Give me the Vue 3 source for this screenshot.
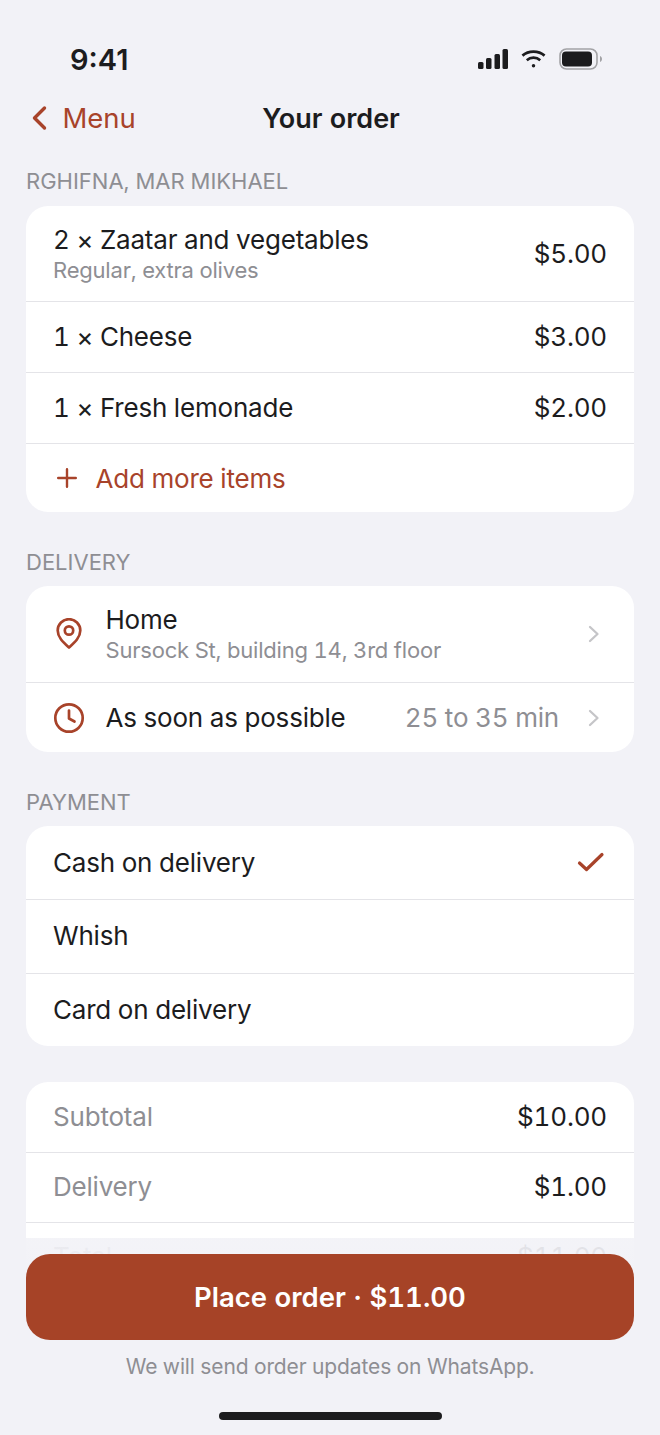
<script setup>
const orderRows = [
  { id: 'cheese', name: '1 × Cheese', price: '$3.00' },
  { id: 'lemonade', name: '1 × Fresh lemonade', price: '$2.00' },
]
const payments = [
  { name: 'Cash on delivery', selected: true },
  { name: 'Whish', selected: false },
  { name: 'Card on delivery', selected: false },
]
const totals = [
  { label: 'Subtotal', value: '$10.00' },
  { label: 'Delivery', value: '$1.00' },
  { label: 'Total', value: '$11.00' },
]
</script>

<template>
  <div class="screen">
    <div class="status">
      <span class="time">9:41</span>
      <div class="status-icons">
        <svg width="30" height="20" viewBox="0 0 30 20" fill="#1c1c1e">
          <rect x="0" y="13" width="5.500" height="7" rx="1.500" />
          <rect x="8" y="9" width="5.500" height="11" rx="1.500" />
          <rect x="16.500" y="5" width="5.500" height="15" rx="1.500" />
          <rect x="24.500" y="0" width="5.500" height="20" rx="1.500" />
        </svg>
        <svg width="25" height="20" viewBox="0 0 26 20" fill="none" stroke="#1c1c1e" stroke-width="2.800">
          <path d="M1.500 6.500C7.800 1 18.200 1 24.500 6.500" />
          <path d="M6 11.200C10 7.800 16 7.800 20 11.200" />
          <circle cx="13" cy="17" r="1.800" fill="#1c1c1e" stroke="none" />
        </svg>
        <svg width="44" height="22" viewBox="0 0 44 22" fill="none">
          <rect x="1" y="1" width="37" height="20" rx="6.500" stroke="#a3a3a6" stroke-width="1.600" />
          <rect x="3" y="3.500" width="30" height="15" rx="4" fill="#1c1c1e" />
          <path d="M41 8v6c1.400-.5 2-1.600 2-3s-.6-2.500-2-3z" fill="#a3a3a6" />
        </svg>
      </div>
    </div>

    <nav class="nav">
      <div class="back">
        <svg width="17" height="26" viewBox="0 0 17 26" fill="none" stroke="#a8432a" stroke-width="3.400" stroke-linecap="round" stroke-linejoin="round">
          <path d="M13.500 3 3.500 13l10 10" />
        </svg>
        <span>Menu</span>
      </div>
      <h1 class="title">Your order</h1>
    </nav>

    <section class="section first">
      <h2 class="label">RGHIFNA, MAR MIKHAEL</h2>
      <div class="card">
        <div class="row row-tall">
          <div class="stack">
            <span class="main">2 × Zaatar and vegetables</span>
            <span class="sub">Regular, extra olives</span>
          </div>
          <span class="main">$5.00</span>
        </div>
        <div v-for="r in orderRows" :key="r.id" class="row row-order">
          <span class="main">{{ r.name }}</span>
          <span class="main">{{ r.price }}</span>
        </div>
        <div class="row row-add">
          <svg width="22" height="22" viewBox="0 0 22 22" fill="none" stroke="#a8432a" stroke-width="2.400" stroke-linecap="round">
            <path d="M11 2.200v17.600M2.200 11h17.600" />
          </svg>
          <span class="add-text">Add more items</span>
        </div>
      </div>
    </section>

    <section class="section">
      <h2 class="label">DELIVERY</h2>
      <div class="card">
        <div class="row row-home icon-row">
          <svg class="lead" width="32" height="32" viewBox="0 0 32 32" fill="none" stroke="#a8432a" stroke-width="2.700" stroke-linejoin="round">
            <path d="M16 29.500C10.500 24.500 4.700 19.500 4.700 12.500a11.300 11.300 0 0 1 22.600 0C27.300 19.500 21.500 24.500 16 29.500z" />
            <circle cx="16" cy="12.500" r="4.200" />
          </svg>
          <div class="stack grow">
            <span class="main">Home</span>
            <span class="sub">Sursock St, building 14, 3rd floor</span>
          </div>
          <svg class="chev" width="12" height="18" viewBox="0 0 12 18" fill="none" stroke="#c5c5c8" stroke-width="2.300" stroke-linecap="round" stroke-linejoin="round">
            <path d="M2 2l7.500 7L2 16" />
          </svg>
        </div>
        <div class="row row-when icon-row">
          <svg class="lead" width="32" height="32" viewBox="0 0 32 32" fill="none" stroke="#a8432a" stroke-width="2.700" stroke-linecap="round" stroke-linejoin="round">
            <circle cx="16" cy="16" r="13.700" />
            <path d="M16 8.500v8l5.500 3" />
          </svg>
          <span class="main grow">As soon as possible</span>
          <span class="eta">25 to 35 min</span>
          <svg class="chev" width="12" height="18" viewBox="0 0 12 18" fill="none" stroke="#c5c5c8" stroke-width="2.300" stroke-linecap="round" stroke-linejoin="round">
            <path d="M2 2l7.500 7L2 16" />
          </svg>
        </div>
      </div>
    </section>

    <section class="section">
      <h2 class="label">PAYMENT</h2>
      <div class="card">
        <div v-for="p in payments" :key="p.name" class="row row-pay">
          <span class="main">{{ p.name }}</span>
          <svg v-if="p.selected" class="check" width="28" height="22" viewBox="0 0 28 22" fill="none" stroke="#a8432a" stroke-width="3.200" stroke-linecap="round" stroke-linejoin="round">
            <path d="M2.500 11 9.500 17.500 25 2.500" />
          </svg>
        </div>
      </div>
    </section>

    <section class="section totals">
      <div class="card">
        <div v-for="t in totals" :key="t.label" class="row row-total">
          <span class="muted">{{ t.label }}</span>
          <span class="main">{{ t.value }}</span>
        </div>
      </div>
    </section>

    <footer class="footer">
      <button class="cta" type="button">Place order · $11.00</button>
      <p class="note">We will send order updates on WhatsApp.</p>
      <div class="home-bar"></div>
    </footer>
  </div>
</template>

<style>
html, body { margin: 0; background: #f2f2f7; }
</style>

<style scoped>
.screen {
  position: relative;
  width: 660px;
  height: 1435px;
  overflow: hidden;
  background: #f2f2f7;
  font-family: Inter, "Liberation Sans", sans-serif;
  font-variant-numeric: tabular-nums;
  color: #1c1c1e;
}
.status {
  height: 88px;
  padding: 30px 57px 0 70px;
  box-sizing: border-box;
  display: flex;
  justify-content: space-between;
  align-items: center;
}
.time { font-size: 29px; font-weight: 600; font-variant-numeric: normal; }
.status-icons { display: flex; align-items: center; gap: 13px; }
.nav {
  position: relative;
  height: 60px;
  padding-left: 2px;
  display: flex;
  align-items: center;
  justify-content: center;
}
.back {
  position: absolute;
  left: 31px;
  top: 0;
  bottom: 0;
  display: flex;
  align-items: center;
  gap: 14.500px;
  color: #a8432a;
  font-size: 27.500px;
}
.title { margin: 0; font-size: 27px; font-weight: 600; }
.section { margin: 0 26px; }
.section.first { margin-top: 20px; }
.section + .section { margin-top: 37px; }
.section.totals { margin-top: 36px; }
.label {
  margin: 0 0 10px;
  font-size: 22px;
  line-height: 27px;
  font-weight: 400;
  color: #8e8e93;
}
.first .label { margin-bottom: 11px; }
.card {
  background: #fff;
  border-radius: 22px;
  overflow: hidden;
}
.row {
  display: flex;
  align-items: center;
  justify-content: space-between;
  box-sizing: border-box;
  padding: 0 27px;
  border-top: 1.500px solid #e4e4e8;
}
.row:first-child { border-top: 0; }
.row-tall { height: 95px; }
.row-home { height: 96px; }
.row-order { height: 71px; }
.row-total { height: 70px; }
.row-add { height: 69px; justify-content: flex-start; padding-left: 30px; gap: 17.500px; }
.row-when { height: 70px; }
.row-pay { height: 73.300px; }
.stack { display: flex; flex-direction: column; }
.main { font-size: 26px; line-height: 32px; letter-spacing: -0.2px; }
.sub { font-size: 22px; line-height: 28px; letter-spacing: -0.2px; color: #8e8e93; }
.muted { font-size: 26px; line-height: 32px; letter-spacing: -0.2px; color: #8e8e93; }
.add-text { font-size: 26px; letter-spacing: -0.2px; color: #a8432a; }
.icon-row { justify-content: flex-start; }
.lead { margin-right: 20.500px; flex: none; }
.grow { flex: 1; }
.eta { font-size: 26px; letter-spacing: -0.2px; color: #8e8e93; margin-right: 29px; }
.chev { flex: none; margin-right: 7px; }
.check { margin-right: 2px; }
.footer {
  position: absolute;
  left: 0;
  right: 0;
  bottom: 0;
  height: 197px;
  box-sizing: border-box;
  padding: 16px 26px 0;
  background: linear-gradient(rgba(242, 242, 247, 0.9), #f2f2f7 40px);
  text-align: center;
}
.cta {
  display: block;
  width: 100%;
  height: 86px;
  border: 0;
  border-radius: 24px;
  background: #a64327;
  color: #fff;
  font-family: inherit;
  font-variant-numeric: tabular-nums;
  font-size: 27.500px;
  font-weight: 600;
}
.note {
  margin: 14px 0 0;
  font-size: 21px;
  line-height: 26px;
  letter-spacing: -0.12px;
  color: #8e8e93;
}
.home-bar {
  width: 223px;
  height: 8px;
  margin: 32px auto 0;
  border-radius: 4px;
  background: #1c1c1e;
}
</style>
